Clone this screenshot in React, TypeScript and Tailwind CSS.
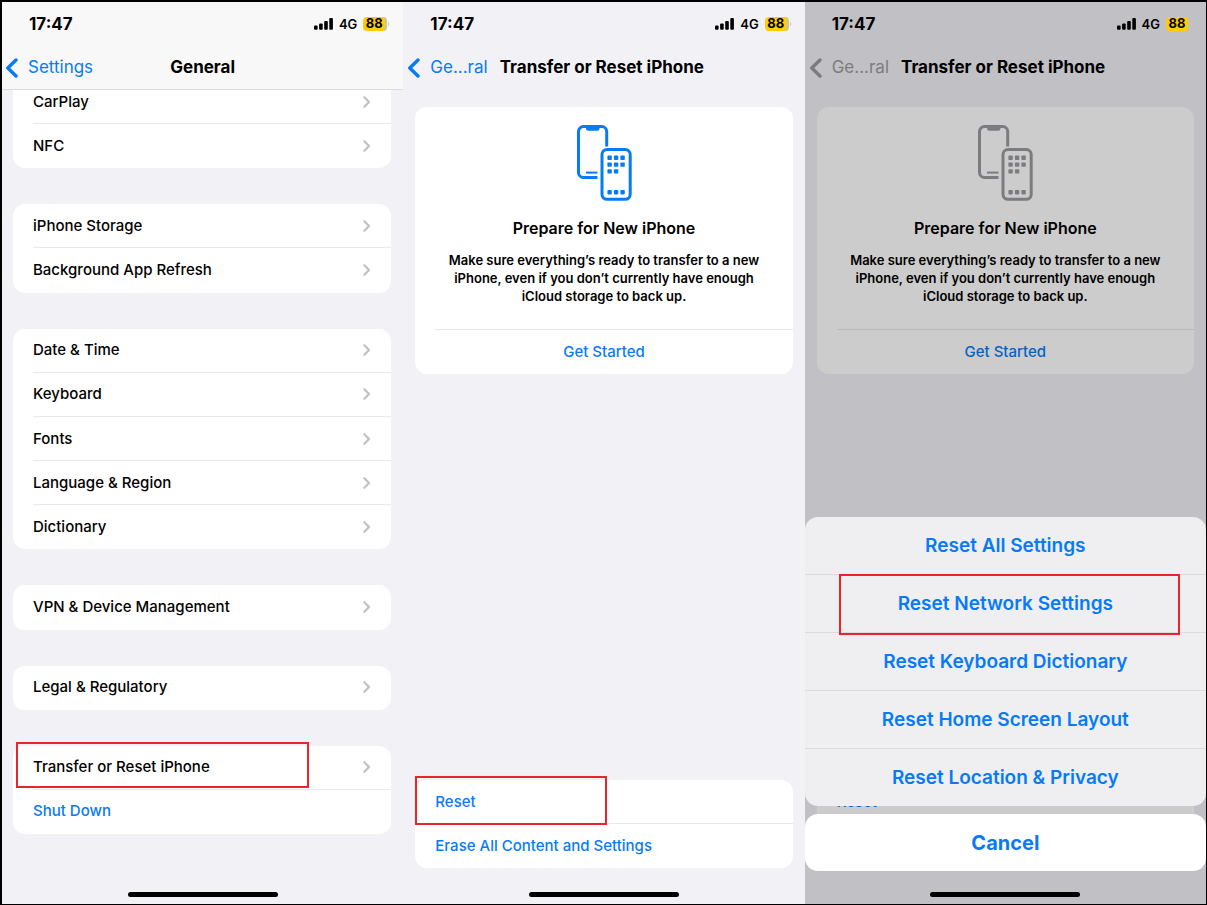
import React from 'react';
import { clsx } from 'clsx';

const StatusBar: React.FC = () => (
  <div className="relative z-20 flex h-[43px] items-center justify-between pl-[27px] pr-[14px] text-black">
    <span className="text-[17px] font-bold leading-5">17:47</span>
    <div className="flex items-center gap-[6px]">
      <svg width="19" height="12" viewBox="0 0 19 12" fill="currentColor" aria-hidden="true">
        <rect x="0" y="7.5" width="3.6" height="4.2" rx="1" />
        <rect x="5.1" y="5.4" width="3.6" height="6.3" rx="1" />
        <rect x="10.2" y="3" width="3.6" height="8.7" rx="1" />
        <rect x="15.3" y="0" width="3.6" height="11.7" rx="1" />
      </svg>
      <span className="text-[13px] font-semibold leading-4">4G</span>
      <div className="flex items-center gap-px">
        <span className="flex h-[14px] w-6 items-center justify-center rounded border-r-2 border-[#c9c3ae] bg-[#ffcc0a] text-[13px] font-bold leading-none">
          88
        </span>
        <span className="h-1 w-px rounded-r bg-[#c6c6c8]" />
      </div>
    </div>
  </div>
);

const BackChevron: React.FC = () => (
  <svg width="13" height="20" viewBox="0 0 13 20" fill="none" aria-hidden="true">
    <path d="M11 2 2.8 10l8.2 8" stroke="currentColor" strokeWidth="3.4" strokeLinecap="round" strokeLinejoin="round" />
  </svg>
);

const RowChevron: React.FC = () => (
  <svg width="8" height="12" viewBox="0 0 8 12" fill="none" aria-hidden="true">
    <path d="M1.4 1.3 6 6l-4.6 4.7" stroke="#c2c2c5" strokeWidth="2.3" strokeLinecap="round" strokeLinejoin="round" />
  </svg>
);

const HomeIndicator: React.FC = () => (
  <div className="absolute inset-x-0 bottom-[7px] z-20 mx-auto h-[5px] w-[150px] rounded-full bg-black" />
);

const TransferIcon: React.FC = () => (
  <svg width="56" height="78" viewBox="0 0 56 78" fill="none" aria-hidden="true">
    <path d="M30.7 22.5V7.5a5 5 0 0 0-5-5H7.5a5 5 0 0 0-5 5v41a5 5 0 0 0 5 5h14" stroke="currentColor" strokeWidth="3" />
    <path d="M10 3h13.5v1.2a2.5 2.5 0 0 1-2.5 2.5h-8.5A2.5 2.5 0 0 1 10 4.2z" fill="currentColor" />
    <path d="M10 48.6h11.5" stroke="currentColor" strokeWidth="2" />
    <rect x="26" y="25.5" width="28.2" height="49.8" rx="5" stroke="currentColor" strokeWidth="3" />
    <g fill="currentColor">
      <rect x="31.4" y="31.6" width="4.4" height="4.4" rx=".8" />
      <rect x="37.9" y="31.6" width="4.4" height="4.4" rx=".8" />
      <rect x="44.4" y="31.6" width="4.4" height="4.4" rx=".8" />
      <rect x="31.4" y="38.4" width="4.4" height="4.4" rx=".8" />
      <rect x="37.9" y="38.4" width="4.4" height="4.4" rx=".8" />
      <rect x="44.4" y="38.4" width="4.4" height="4.4" rx=".8" />
      <rect x="31.4" y="45.2" width="4.4" height="4.4" rx=".8" />
      <rect x="37.9" y="45.2" width="4.4" height="4.4" rx=".8" />
      <rect x="31.4" y="66" width="4.4" height="4.4" rx=".8" />
      <rect x="37.9" y="66" width="4.4" height="4.4" rx=".8" />
      <rect x="44.4" y="66" width="4.4" height="4.4" rx=".8" />
    </g>
  </svg>
);

interface RowProps {
  label: string;
  action?: boolean;
  covered?: boolean;
  highlight?: string;
}

const Row: React.FC<RowProps> = ({ label, action, covered, highlight }) => (
  <li className={clsx('group relative flex flex-1 pl-5', covered && 'invisible')}>
    <button
      type="button"
      className={clsx(
        'flex min-h-11 w-full items-center justify-between border-b border-[#e9e9eb] pr-5 text-left text-[15px] font-medium leading-5 group-last:border-transparent',
        action ? 'text-[#077bf7]' : 'text-black'
      )}
    >
      {label}
      {!action && <RowChevron />}
    </button>
    {highlight && <span className={clsx('pointer-events-none absolute z-10 border-2 border-[#e8242c]', highlight)} />}
  </li>
);

// Groups share spare height in proportion to their row count
const Group: React.FC<{ rows: RowProps[] }> = ({ rows }) => (
  <ul className="flex flex-col rounded-xl bg-white" style={{ flexGrow: rows.length }}>
    {rows.map((row) => (
      <Row key={row.label} {...row} />
    ))}
  </ul>
);

const groups: RowProps[][] = [
  [{ label: 'CarPlay' }, { label: 'NFC' }],
  [{ label: 'iPhone Storage' }, { label: 'Background App Refresh' }],
  [
    { label: 'Date & Time' },
    { label: 'Keyboard' },
    { label: 'Fonts' },
    { label: 'Language & Region' },
    { label: 'Dictionary' },
  ],
  [{ label: 'VPN & Device Management' }],
  [{ label: 'Legal & Regulatory' }],
  [
    { label: 'Transfer or Reset iPhone', highlight: '-top-1 bottom-[2px] left-[3px] right-[82px]' },
    { label: 'Shut Down', action: true },
  ],
];

const GeneralScreen: React.FC = () => (
  <section className="relative flex flex-col bg-[#f2f1f6]">
    <header className="relative z-10 h-[88px] border-b border-[#dcdcde] bg-[#f8f8f8]">
      <StatusBar />
      <div className="grid h-11 grid-cols-3 items-center px-[3px] pt-0.5">
        <a href="#settings" className="flex items-center gap-[10px] text-[17px] text-[#077bf7]">
          <BackChevron />
          Settings
        </a>
        <h1 className="text-center text-[17px] font-bold text-black">General</h1>
      </div>
    </header>
    <div className="-mt-[10px] flex flex-1 flex-col gap-9 pb-[70px] pl-[11px] pr-3">
      {groups.map((rows) => (
        <Group key={rows[0].label} rows={rows} />
      ))}
    </div>
    <HomeIndicator />
  </section>
);

const sheetOptions = [
  'Reset All Settings',
  'Reset Network Settings',
  'Reset Keyboard Dictionary',
  'Reset Home Screen Layout',
  'Reset Location & Privacy',
];

const ResetSheet: React.FC = () => (
  <div className="absolute inset-0 z-10 flex flex-col justify-end gap-2 bg-black/20 pb-[33px]">
    <div className="rounded-[13px] bg-[#efeff1]">
      {sheetOptions.map((option) => (
        <div key={option} className="relative border-b border-[#dbdbde] last:border-b-0">
          <button type="button" className="block h-[57px] w-full pt-0.5 text-[19px] font-semibold text-[#077bf7]">
            {option}
          </button>
          {option === 'Reset Network Settings' && (
            <span className="pointer-events-none absolute -bottom-[3px] -top-px left-[34px] right-[26px] z-10 border-2 border-[#e8242c]" />
          )}
        </div>
      ))}
    </div>
    <button type="button" className="h-[57px] w-full rounded-[13px] bg-white text-xl font-bold text-[#077bf7]">
      Cancel
    </button>
  </div>
);

const TransferScreen: React.FC<{ sheetOpen?: boolean }> = ({ sheetOpen }) => {
  const tint = sheetOpen ? 'text-[#9c9ca0]' : 'text-[#077bf7]';

  return (
    <section className="relative flex flex-col bg-[#f2f1f6]">
      <StatusBar />
      <header className="flex h-11 items-center gap-3 pl-1 pt-0.5">
        <a href="#general" className={clsx('flex items-center gap-[10px] text-[17px]', tint)}>
          <BackChevron />
          Ge...ral
        </a>
        <h1 className="text-[17px] font-bold text-black">Transfer or Reset iPhone</h1>
      </header>
      <div className="flex flex-1 flex-col justify-between px-3 pb-9 pt-[18px]">
        <div className="rounded-xl bg-white text-center">
          <div className="flex flex-col items-center px-5 pb-6 pt-[17px]">
            <span className={tint}>
              <TransferIcon />
            </span>
            <h2 className="mt-4 text-base font-semibold leading-5 text-black">Prepare for New iPhone</h2>
            <p className="mt-[13px] text-[13px] font-semibold leading-[18px] text-black">
              Make sure everything’s ready to transfer to a new iPhone, even if you don’t currently have enough iCloud
              storage to back up.
            </p>
          </div>
          <div className="pl-5">
            <button
              type="button"
              className="h-[45px] w-full border-t border-[#e9e9eb] pr-5 text-[15px] font-medium leading-5 text-[#077bf7]"
            >
              Get Started
            </button>
          </div>
        </div>
        <div>
          <Group
            rows={[
              {
                label: 'Reset',
                action: true,
                highlight: sheetOpen ? undefined : '-top-1 -bottom-px left-0 right-[186px]',
              },
              { label: 'Erase All Content and Settings', action: true, covered: sheetOpen },
            ]}
          />
        </div>
      </div>
      {sheetOpen && <ResetSheet />}
      <HomeIndicator />
    </section>
  );
};

export default function App() {
  return (
    <main className="grid min-h-screen grid-cols-3 border-b border-l-2 border-r border-t-2 border-black font-['Inter','Liberation_Sans',sans-serif]">
      <GeneralScreen />
      <TransferScreen />
      <TransferScreen sheetOpen />
    </main>
  );
}
